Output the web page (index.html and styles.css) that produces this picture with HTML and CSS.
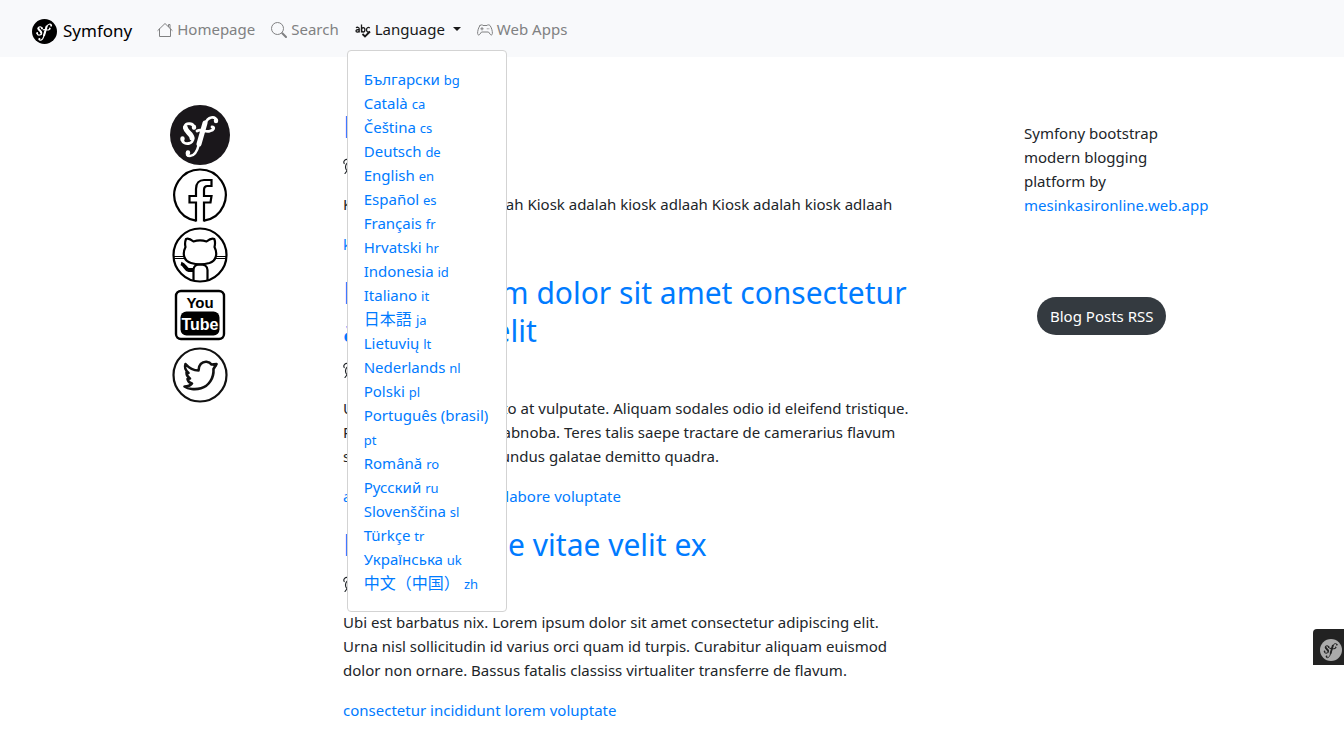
FILE: index.html
```html
<!DOCTYPE html>
<html lang="en">
<head>
<meta charset="utf-8">
<title>Symfony</title>
<link rel="stylesheet" href="styles.css">
</head>
<body>
<svg class="sprite" aria-hidden="true">
  <symbol id="sf" viewBox="0 0 60 60">
    <g fill="none" stroke="currentColor" stroke-linecap="round" stroke-linejoin="round">
      <path stroke-width="2.800" d="M24 23C24 18 16 17 14.500 22C14 25 22 29 23 33C24 39 14 41 12 35"/>
      <path stroke-width="5" d="M15.500 23C16 27 22 29 22 33"/>
      <path stroke-width="4.400" d="M24 22.500V22M12.500 34V33.500M18 48V47.500M46 16V15.500"/>
      <path stroke-width="2.600" d="M46.500 15C45 11 38 11 35 19L29 39C27 47 24 51 20 51C17 51 16 49 17.500 47"/>
      <path stroke-width="5" d="M35 18L29 39"/>
      <path stroke-width="2.800" d="M27 26C32 23 35 28 40 26C44 25 45 22 42 22"/>
    </g>
  </symbol>
  <symbol id="alarm" viewBox="0 0 16 16">
    <g fill="none" stroke="currentColor" stroke-linecap="round" stroke-width="1.200">
      <circle cx="8" cy="9" r="5.500"/>
      <path d="M8 5.500V9L6 11M3.500 13.500L2 15.500M12.500 13.500L14 15.500M6.500 .5H9.500M1.200 5.500C-.2 3 3 .2 5.200 2M14.800 5.500C16.200 3 13 .2 10.800 2"/>
    </g>
  </symbol>
</svg>

<header class="navbar">
  <a class="brand" href="#">
    <svg class="brand-mark" viewBox="0 0 60 60" aria-hidden="true"><circle cx="30" cy="30" r="30"/><use href="#sf" color="#fff"/></svg>
    <span>Symfony</span>
  </a>
  <nav class="nav">
    <a class="nav-link" href="#">
      <svg class="icon" viewBox="0 0 16 16" aria-hidden="true"><path fill="none" stroke="currentColor" stroke-linecap="round" stroke-linejoin="round" d="M.8 8.500L8 1.500L15.200 8.500M2.500 7V14.500H13.500V7M11.500 4.500V2.500H13V6"/></svg>
      Homepage</a>
    <a class="nav-link" href="#">
      <svg class="icon" viewBox="0 0 16 16" aria-hidden="true"><circle cx="6.500" cy="6.500" r="6" fill="none" stroke="currentColor"/><path stroke="currentColor" stroke-width="2" stroke-linecap="round" d="M11.300 11.300L15 15"/></svg>
      Search</a>
    <div class="dropdown">
      <button class="nav-link active" type="button" aria-expanded="true">
        <svg class="icon" viewBox="0 0 16 16" aria-hidden="true"><g fill="none" stroke="currentColor" stroke-width="1.300"><path d="M1 5.800C2 5 4.200 5 4.200 6.700V10.500M4.200 7.500C2 7.500 1 8 1 9C1 10.500 3.500 10.500 4.200 9"/><path d="M6.500 2.500V10.500"/><ellipse cx="8.200" cy="7.800" rx="1.700" ry="2.200"/><path d="M14.800 6C13 4.700 11.500 6 11.500 7.800C11.500 9.800 13 10.800 14.800 9.700"/><path stroke-width="1.800" d="M7.500 12L10 14.500L15 9.500"/></g></svg>
        Language
        <span class="caret"></span>
      </button>
      <ul class="menu">
        <li><a href="#">Български <small>bg</small></a></li>
        <li><a href="#">Català <small>ca</small></a></li>
        <li><a href="#">Čeština <small>cs</small></a></li>
        <li><a href="#">Deutsch <small>de</small></a></li>
        <li><a href="#">English <small>en</small></a></li>
        <li><a href="#">Español <small>es</small></a></li>
        <li><a href="#">Français <small>fr</small></a></li>
        <li><a href="#">Hrvatski <small>hr</small></a></li>
        <li><a href="#">Indonesia <small>id</small></a></li>
        <li><a href="#">Italiano <small>it</small></a></li>
        <li lang="ja"><a href="#">日本語 <small>ja</small></a></li>
        <li><a href="#">Lietuvių <small>lt</small></a></li>
        <li><a href="#">Nederlands <small>nl</small></a></li>
        <li><a href="#">Polski <small>pl</small></a></li>
        <li><a href="#">Português (brasil) <small>pt</small></a></li>
        <li><a href="#">Română <small>ro</small></a></li>
        <li><a href="#">Русский <small>ru</small></a></li>
        <li><a href="#">Slovenščina <small>sl</small></a></li>
        <li><a href="#">Türkçe <small>tr</small></a></li>
        <li><a href="#">Українська <small>uk</small></a></li>
        <li lang="zh"><a href="#">中文（中国） <small>zh</small></a></li>
      </ul>
    </div>
    <a class="nav-link" href="#">
      <svg class="icon" viewBox="0 0 16 16" aria-hidden="true"><g fill="none" stroke="currentColor" stroke-linecap="round" stroke-linejoin="round"><path d="M3 3.500C4 2.500 5.500 2.800 6 3.500H10C10.500 2.800 12 2.500 13 3.500C14.500 5.500 15.500 9 15.400 11.500C15.200 13.500 13.800 13.300 13 12L11.500 10H4.500L3 12C2.200 13.300 .8 13.500 .6 11.500C.5 9 1.500 5.500 3 3.500Z"/><path d="M5 5.500V8M3.800 6.800H6.200M10.200 6.800H10.300M11.800 6.800H11.900"/></g></svg>
      Web Apps</a>
  </nav>
</header>

<div class="page">
  <aside class="social">
    <a href="#" aria-label="Symfony"><svg viewBox="0 0 60 60"><circle cx="30" cy="30" r="30" fill="#1a171b"/><use href="#sf" color="#fff"/></svg></a>
    <a href="#" aria-label="Facebook"><svg viewBox="0 0 60 60"><g fill="none" stroke="#000" stroke-width="2.200"><path d="M26 55.600A25.700 25.700 0 1 1 34 55.600"/><path d="M26 56.500V37.500H19.500V31H26V24C26 18 29.500 15 34 15H41.500V21H37.500C34.500 21 34 22.500 34 25V31H41.500L40.500 37.500H34V56.500"/></g></svg></a>
    <a href="#" aria-label="GitHub"><svg viewBox="0 0 60 60"><g fill="none" stroke="#000" stroke-width="2.200" stroke-linejoin="round"><circle cx="30" cy="30" r="26.500"/><path d="M16 14C18 13 21 14.500 23.500 16.500C28 15 32 15 36.500 16.500C39 14.500 42 13 44.300 14C45.500 17 45 20 44.500 22C48 29 46 36 39.500 38C34 39.500 26 39.500 21 38C14 36 12 29 15.500 22C15 20 14.800 17 16 14Z"/><path d="M23.500 56V45C23.500 41.500 26 39.500 30 39.500C35 39.500 37.500 41.500 37.500 45V56"/><path stroke-width="3.800" d="M11 38.500C15 39.500 15 44 18.500 45H23.500"/><path stroke-width="1.100" d="M4 31.500H14M4.500 33.500H14.500M46 31.500H56M45.500 33.500H55.500"/></g></svg></a>
    <a href="#" aria-label="YouTube"><svg class="tube" viewBox="0 0 60 60"><rect x="6" y="6" width="48" height="48" rx="5" fill="none" stroke="#000" stroke-width="2.400"/><rect x="10.500" y="26.500" width="39" height="24" rx="6"/><text x="30" y="23" font-size="15" text-anchor="middle">You</text><text x="30" y="45" font-size="16" text-anchor="middle" fill="#fff">Tube</text></svg></a>
    <a href="#" aria-label="Twitter"><svg viewBox="0 0 60 60"><g fill="none" stroke="#111" stroke-width="2.200" stroke-linejoin="round"><circle cx="30" cy="30" r="26.500"/><path stroke-width="2.600" d="M15.500 19C19 23 23 25.500 28.500 25.500C28.500 20 32 16.500 36.500 16.800C39 17 40.500 18 41.500 19.500L46.500 19L43.500 24C44 33 39 41 31 43.300C25 45 18 44 14.500 41.500C18 41.500 20.500 40.500 22 38.500C19.500 38 18 36.500 17.500 34L20 33.500C17.500 32 16.500 30 16.500 27.500L18.500 28C15.500 25.500 14.500 22 15.500 19Z"/><path d="M43 19.500L47 20.500"/></g></svg></a>
  </aside>

  <main class="posts">
    <article class="post">
      <h2><a href="#">Kiosk</a></h2>
      <div class="meta"><svg class="icon" aria-hidden="true"><use href="#alarm"/></svg></div>
      <p>Kiosk adalah kiosk adlaah Kiosk adalah kiosk adlaah Kiosk adalah kiosk adlaah</p>
      <div class="tags"><a href="#">kiosk</a></div>
    </article>
    <article class="post">
      <h2><a href="#">Lorem ipsum dolor sit amet consectetur adipiscing elit</a></h2>
      <div class="meta"><svg class="icon" aria-hidden="true"><use href="#alarm"/></svg></div>
      <p>Ut suscipit posuere justo at vulputate. Aliquam sodales odio id eleifend tristique. Potus sensim ad ferox abnoba. Teres talis saepe tractare de camerarius flavum sensorem. Silva de secundus galatae demitto quadra.</p>
      <div class="tags"><a href="#">adipiscing</a> <a href="#">consectetur</a> <a href="#">labore</a> <a href="#">voluptate</a></div>
    </article>
    <article class="post">
      <h2><a href="#">Pellentesque vitae velit ex</a></h2>
      <div class="meta"><svg class="icon" aria-hidden="true"><use href="#alarm"/></svg></div>
      <p>Ubi est barbatus nix. Lorem ipsum dolor sit amet consectetur adipiscing elit. Urna nisl sollicitudin id varius orci quam id turpis. Curabitur aliquam euismod dolor non ornare. Bassus fatalis classiss virtualiter transferre de flavum.</p>
      <div class="tags"><a href="#">consectetur</a> <a href="#">incididunt</a> <a href="#">lorem</a> <a href="#">voluptate</a></div>
    </article>
  </main>

  <aside class="about">
    <p>Symfony bootstrap modern blogging platform by <a href="#">mesinkasironline.web.app</a></p>
    <a class="rss" href="#">Blog Posts RSS</a>
  </aside>
</div>

<button class="toolbar" type="button" aria-label="Show toolbar">
  <svg viewBox="0 0 60 60" aria-hidden="true"><circle cx="30" cy="30" r="30" fill="#aaa"/><use href="#sf" color="#222"/></svg>
</button>
</body>
</html>
```
FILE: styles.css
```css
* { box-sizing: border-box; }

body {
  margin: 0;
  background: #fff;
  color: #212529;
  font-family: "Noto Sans", "Noto Sans CJK SC", sans-serif;
  font-size: 15px;
  line-height: 24px;
}

a { color: #007bff; text-decoration: none; }
p, h2, ul { margin: 0; padding: 0; }
small { font-size: 13px; line-height: 1; }

.sprite { position: absolute; width: 0; height: 0; }
.icon { width: 16px; height: 16px; flex: none; }

.navbar {
  display: flex;
  align-items: center;
  gap: 17px;
  min-height: 57px;
  padding: 4px 32px;
  background: #f8f9fb;
}

.brand {
  display: flex;
  align-items: center;
  gap: 6px;
  padding-top: 5px;
  color: #000;
  font-size: 17px;
}
.brand-mark { width: 25px; height: 25px; }

.nav { display: flex; align-items: center; }

.nav-link {
  display: flex;
  align-items: center;
  gap: 4px;
  padding: 8px;
  border: 0;
  background: none;
  color: #808182;
  font: inherit;
}
.nav-link .icon { margin-top: 2px; }
.nav-link.active { color: #191919; }

.caret {
  margin-left: 4px;
  border: 4px solid transparent;
  border-top-color: currentColor;
  border-bottom: 0;
}

.dropdown { position: relative; }

.menu {
  position: absolute;
  z-index: 10;
  top: 100%;
  left: 0;
  width: 160px;
  margin-top: 1px;
  padding: 16px;
  border: 1px solid #d3d3d3;
  border-radius: 4px;
  background: #fff;
  list-style: none;
}
.menu li:lang(ja) { font-family: "Noto Sans", "Noto Sans CJK JP", sans-serif; }
.menu li:lang(ja), .menu li:lang(zh) { font-size: 16px; }

.page {
  display: grid;
  grid-template-columns: minmax(0, 286fr) minmax(0, 681fr) minmax(0, 206fr);
  padding: 48px 114px 0 57px;
}

.social { display: flex; flex-direction: column; align-items: center; }
.social a { height: 60px; }
.social svg { display: block; width: 60px; height: 60px; }
.tube { font-family: "Liberation Sans", sans-serif; font-weight: 700; }

.posts { display: grid; gap: 18px; padding: 3px 112px 0 0; align-content: start; }
.post h2 { margin-bottom: 8px; font-size: 30px; font-weight: 400; line-height: 38px; }
.meta { display: flex; align-items: center; height: 24px; margin-bottom: 14px; }
.post p { margin-bottom: 16px; }

.about { display: flex; flex-direction: column; align-items: flex-start; gap: 80px; padding: 16px 20px 0 0; }
.rss {
  margin-left: 13px;
  padding: 7px 13px;
  border-radius: 19px;
  background: #343a40;
  color: #fff;
}

.toolbar {
  position: fixed;
  right: 0;
  bottom: 65px;
  width: 31px;
  height: 36px;
  padding: 10px 2px 4px 7px;
  border: 0;
  border-radius: 4px 0 0 0;
  background: #222;
}
.toolbar svg { display: block; width: 22px; height: 22px; }
```
